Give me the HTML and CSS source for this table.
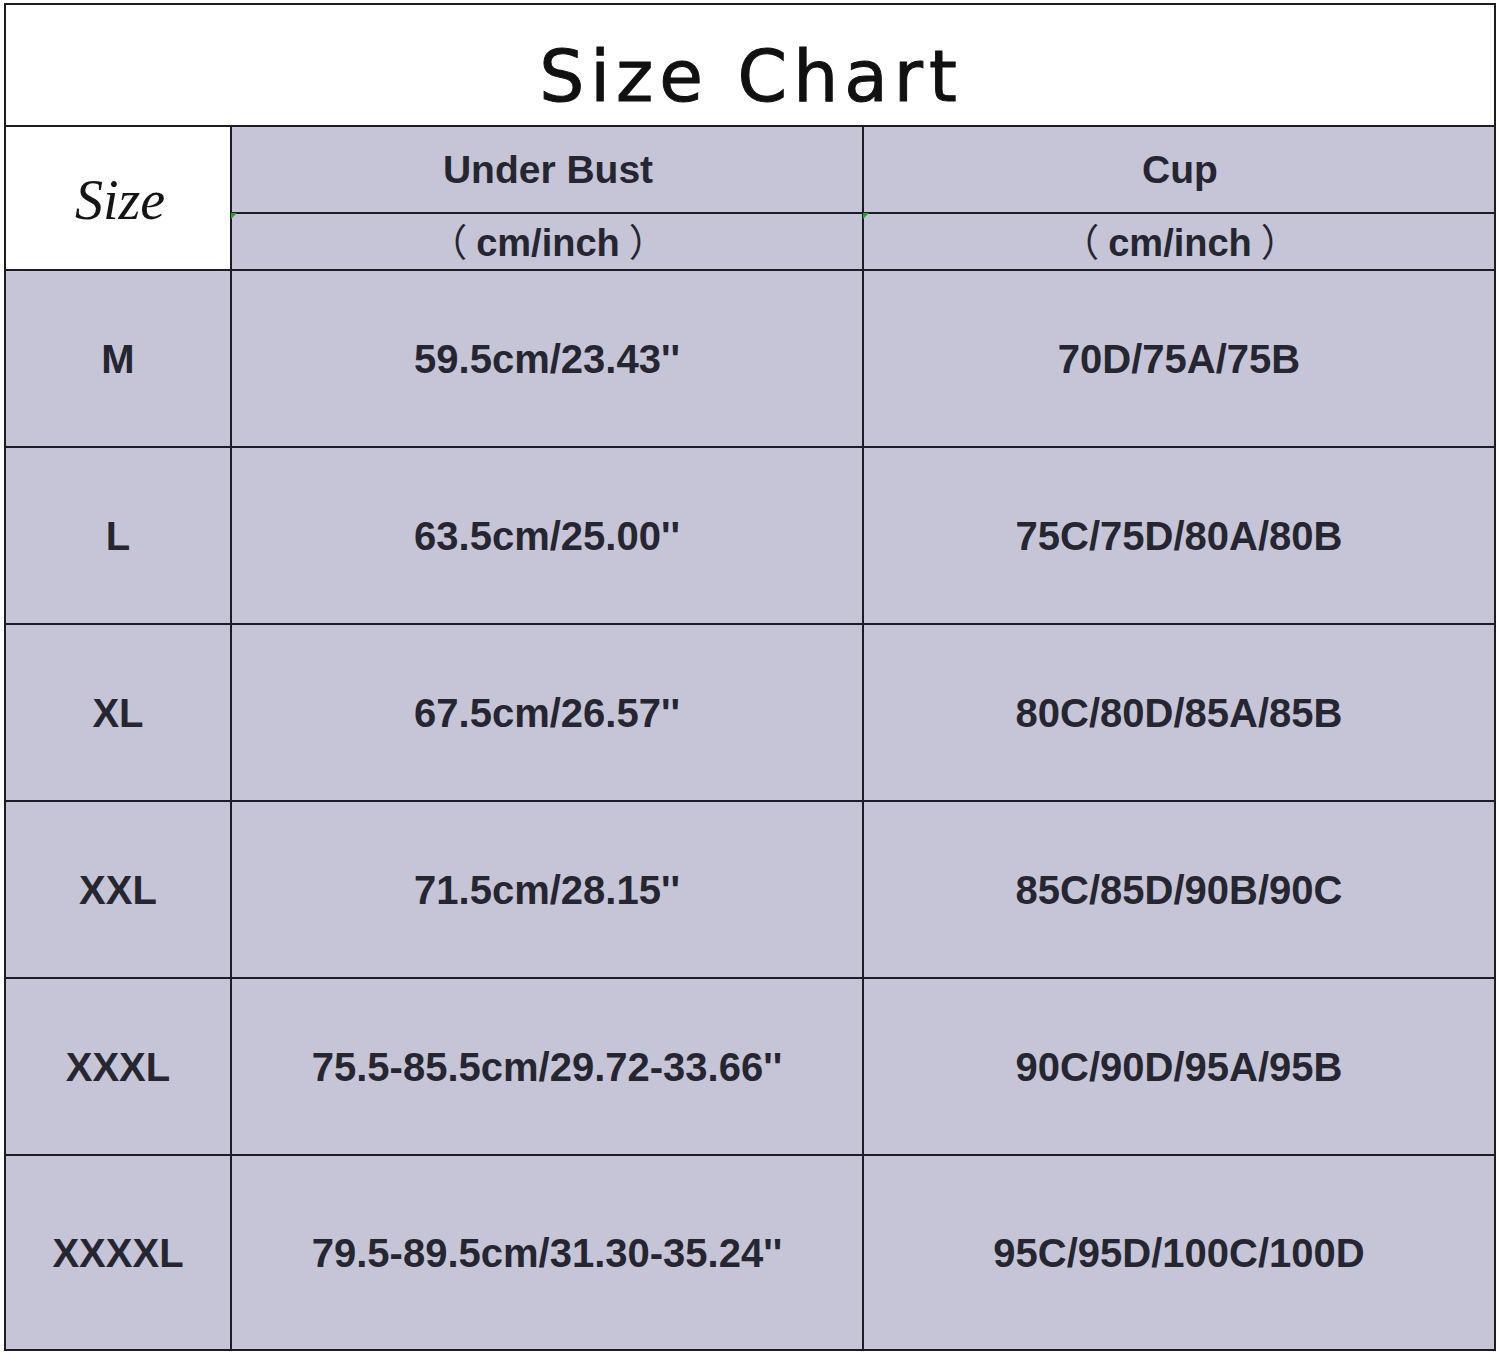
FILE: index.html
```html
<!DOCTYPE html>
<html lang="en">
<head>
<meta charset="utf-8">
<title>Size Chart</title>
<link rel="stylesheet" href="styles.css">
</head>
<body>
<table class="chart">
  <colgroup>
    <col class="c-size">
    <col class="c-val">
    <col class="c-val">
  </colgroup>
  <tr class="r-title">
    <th colspan="3" class="title">Size Chart</th>
  </tr>
  <tr class="r-head">
    <th rowspan="2" class="size-label">Size</th>
    <th class="head">Under Bust</th>
    <th class="head">Cup</th>
  </tr>
  <tr class="r-unit">
    <th class="head unit"><span class="mark"></span><span class="fw fw-l">（</span>cm/inch<span class="fw fw-r">）</span></th>
    <th class="head unit"><span class="mark"></span><span class="fw fw-l">（</span>cm/inch<span class="fw fw-r">）</span></th>
  </tr>
  <tr class="r-data">
    <td class="sz">M</td>
    <td>59.5cm/23.43''</td>
    <td>70D/75A/75B</td>
  </tr>
  <tr class="r-data">
    <td class="sz">L</td>
    <td>63.5cm/25.00''</td>
    <td>75C/75D/80A/80B</td>
  </tr>
  <tr class="r-data">
    <td class="sz">XL</td>
    <td>67.5cm/26.57''</td>
    <td>80C/80D/85A/85B</td>
  </tr>
  <tr class="r-data">
    <td class="sz">XXL</td>
    <td>71.5cm/28.15''</td>
    <td>85C/85D/90B/90C</td>
  </tr>
  <tr class="r-data">
    <td class="sz">XXXL</td>
    <td>75.5-85.5cm/29.72-33.66''</td>
    <td>90C/90D/95A/95B</td>
  </tr>
  <tr class="r-last">
    <td class="sz"><span class="mark mark-bottom"></span>XXXXL</td>
    <td>79.5-89.5cm/31.30-35.24''</td>
    <td>95C/95D/100C/100D</td>
  </tr>
</table>
</body>
</html>
```

FILE: styles.css
```css
html, body {
  margin: 0;
  padding: 0;
  background: #ffffff;
}

body {
  padding: 3px 0 0 4px;
  font-family: "Liberation Sans", Arial, "Noto Sans CJK SC", sans-serif;
  color: #262630;
}

.chart {
  border-collapse: collapse;
  table-layout: fixed;
  width: 1490px;
  border: 2px solid #1c1c26;
}

.c-size { width: 226px; }
.c-val { width: 632px; }

.chart th,
.chart td {
  border: 2px solid #1c1c26;
  background: #c6c5d8;
  text-align: center;
  vertical-align: middle;
  padding: 0;
  font-weight: bold;
  font-size: 40px;
  line-height: 1;
  position: relative;
}

.r-title { height: 122px; }
.r-head { height: 87px; }
.r-unit { height: 57px; }
.r-data { height: 177px; }
.r-last { height: 195px; }

.chart .title {
  background: #ffffff;
  font-family: "DejaVu Sans", "Liberation Sans", sans-serif;
  font-weight: normal;
  font-size: 71px;
  letter-spacing: 6px;
  color: #111111;
  vertical-align: bottom;
  padding-bottom: 13px;
  padding-left: 2px;
  -webkit-text-stroke: 1px #111111;
}

.chart .size-label {
  background: #ffffff;
  font-family: "Liberation Serif", "Times New Roman", serif;
  font-style: italic;
  font-weight: normal;
  font-size: 56px;
  color: #151515;
  padding-top: 4px;
  padding-left: 4px;
}

.chart .head {
  font-size: 39px;
  padding-left: 2px;
}

.chart .unit {
  font-size: 38px;
  padding-left: 2px;
}

.fw {
  font-family: "Noto Sans CJK SC", sans-serif;
  font-weight: 400;
  font-size: 38px;
  display: inline-block;
}

.fw-l { margin-right: 9px; }
.fw-r { margin-left: 9px; }

.chart .sz {
  padding-left: 0;
}

.mark {
  position: absolute;
  left: -1px;
  top: -1px;
  width: 0;
  height: 0;
  border-top: 6px solid #2f9a2f;
  border-right: 6px solid transparent;
}

.mark-bottom {
  top: auto;
  bottom: -9px;
  left: -1px;
  border-top: none;
  border-bottom: 7px solid #2f9a2f;
}
```
